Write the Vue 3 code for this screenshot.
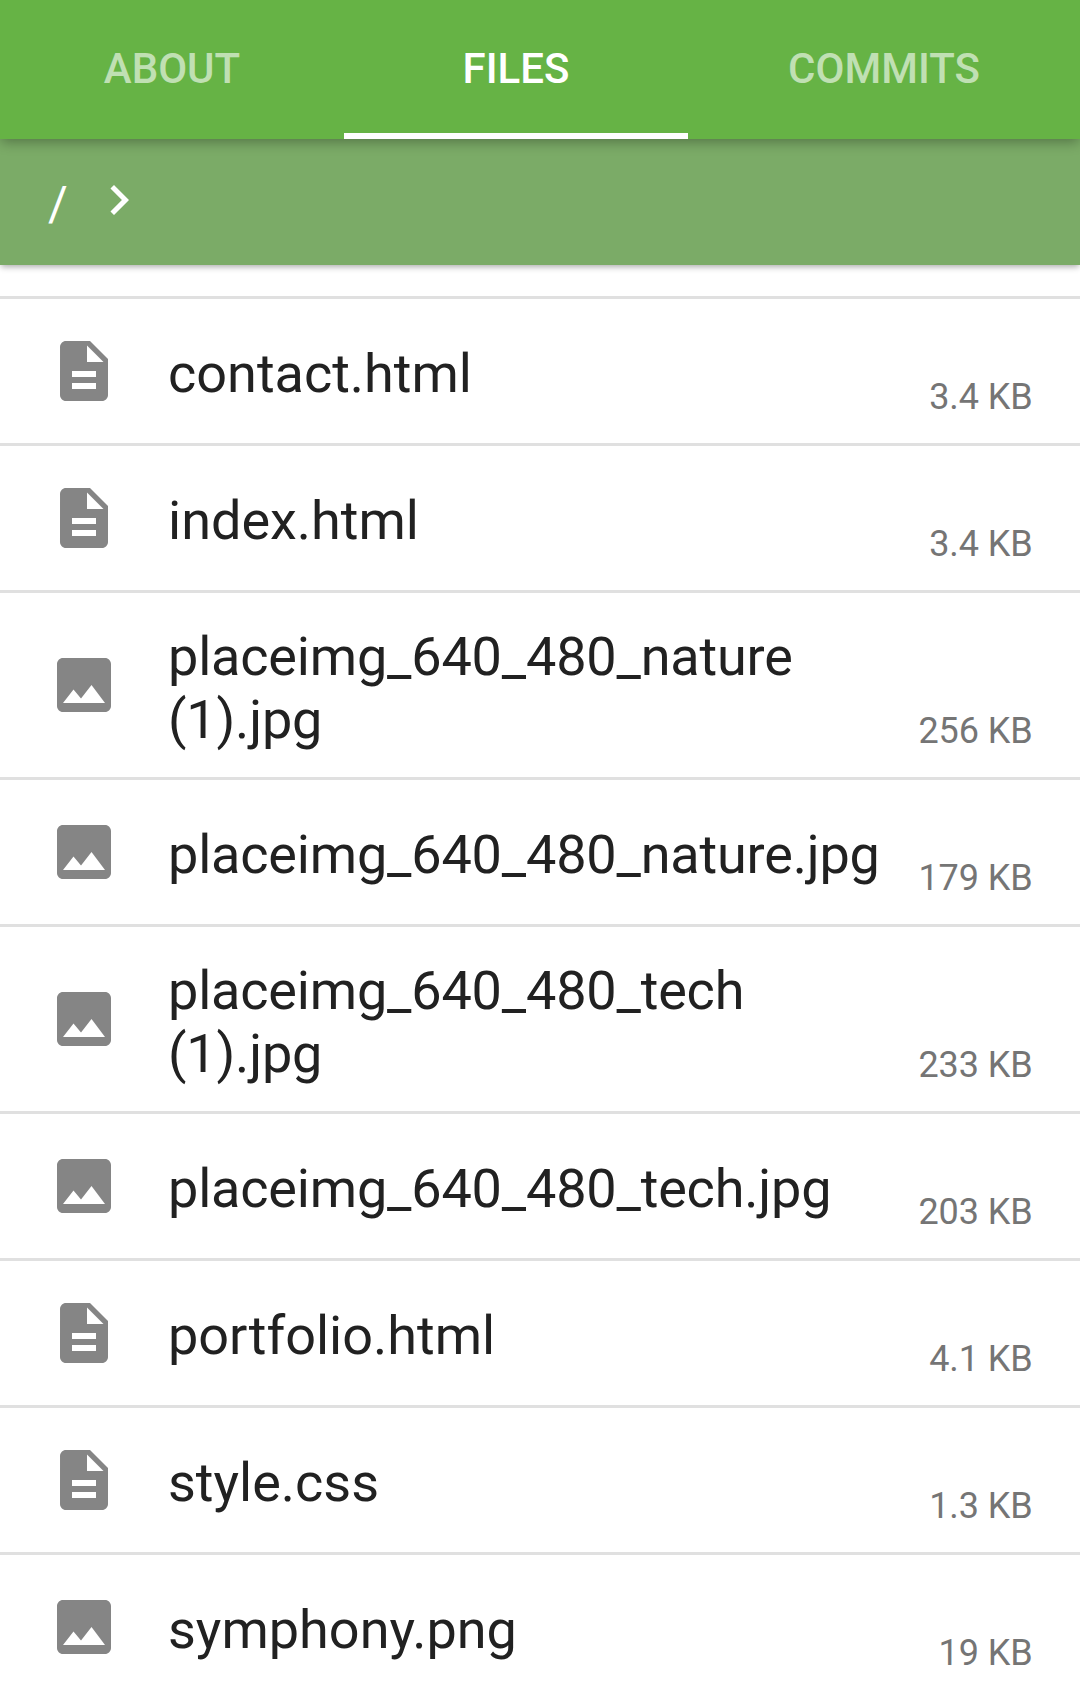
<script setup>
const files = [
  { name: 'contact.html', size: '3.4 KB', type: 'doc' },
  { name: 'index.html', size: '3.4 KB', type: 'doc' },
  { name: 'placeimg_640_480_nature (1).jpg', size: '256 KB', type: 'image', long: true, tall: true },
  { name: 'placeimg_640_480_nature.jpg', size: '179 KB', type: 'image', long: true },
  { name: 'placeimg_640_480_tech (1).jpg', size: '233 KB', type: 'image', long: true, tall: true },
  { name: 'placeimg_640_480_tech.jpg', size: '203 KB', type: 'image', long: true },
  { name: 'portfolio.html', size: '4.1 KB', type: 'doc' },
  { name: 'style.css', size: '1.3 KB', type: 'doc' },
  { name: 'symphony.png', size: '19 KB', type: 'image' },
]
const paths = {
  doc: 'M14 2H6c-1.1 0-1.99.9-1.99 2L4 20c0 1.1.89 2 1.99 2H18c1.1 0 2-.9 2-2V8l-6-6zm2 16H8v-2h8v2zm0-4H8v-2h8v2zm-3-5V3.5L18.5 9H13z',
  image: 'M21 19V5c0-1.1-.9-2-2-2H5c-1.1 0-2 .9-2 2v14c0 1.1.9 2 2 2h14c1.1 0 2-.9 2-2zM8.500 13.500l2.500 3.010L14.500 12l4.500 6H5l3.500-4.500z',
}
</script>

<template>
  <div class="screen">
    <nav class="tabs">
      <div class="tab about">ABOUT</div>
      <div class="tab files active">FILES</div>
      <div class="tab commits">COMMITS</div>
    </nav>
    <div class="crumbs">
      <span class="root">/</span>
      <svg class="chevron" viewBox="0 0 24 24"><path d="M10 6L8.590 7.410 13.170 12l-4.580 4.590L10 18l6-6z" /></svg>
    </div>
    <ul class="list">
      <li v-for="f in files" :key="f.name" class="row" :class="{ tall: f.tall, long: f.long }">
        <svg class="icon" viewBox="0 0 24 24"><path :d="paths[f.type]" /></svg>
        <span class="name">{{ f.name }}</span>
        <span class="size">{{ f.size }}</span>
      </li>
    </ul>
  </div>
</template>

<style>
body { margin: 0; overflow: hidden; }
</style>

<style scoped>
.screen { width: 1080px; height: 1699px; overflow: hidden; background: #fff; font-family: Roboto, sans-serif; color: #212121; }
.tabs { position: relative; z-index: 2; display: flex; height: 139px; background: #66b345; box-shadow: 0 4px 12px -1px rgba(0,0,0,.32); }
.tab { box-sizing: border-box; height: 139px; line-height: 138px; text-align: center; font-size: 42px; font-weight: 500; color: rgba(255,255,255,.6); }
.about { width: 344px; }
.files { width: 344px; }
.commits { width: 392px; }
.active { color: #fff; border-bottom: 6px solid #fff; }
.crumbs { position: relative; z-index: 1; display: flex; align-items: center; height: 126px; background: #7bab67; color: #fff; box-shadow: 0 3px 6px -1px rgba(0,0,0,.32); }
.root { margin: 2px 0 0 48px; font-size: 48px; width: 18px; }
.chevron { width: 60px; height: 60px; margin: 0 0 4px 23px; fill: #fff; }
.list { list-style: none; margin: 31px 0 0; padding: 0; }
.row { box-sizing: border-box; display: flex; align-items: center; height: 147px; border-top: 3px solid #e0e0e0; padding: 0 47.5px 0 48px; }
.row.tall { height: 187px; }
.icon { width: 72px; height: 72px; fill: #858585; flex: none; }
.name { margin: 4px 0 0 48px; width: 730px; font-size: 54px; line-height: 63px; flex: none; }
.long .name { letter-spacing: -.18px; }
.tall .name { width: 650px; margin-top: 6px; }
.size { margin-left: auto; align-self: flex-end; margin-bottom: 25px; font-size: 36px; line-height: 42px; letter-spacing: -.1px; color: #757575; white-space: nowrap; }
</style>
